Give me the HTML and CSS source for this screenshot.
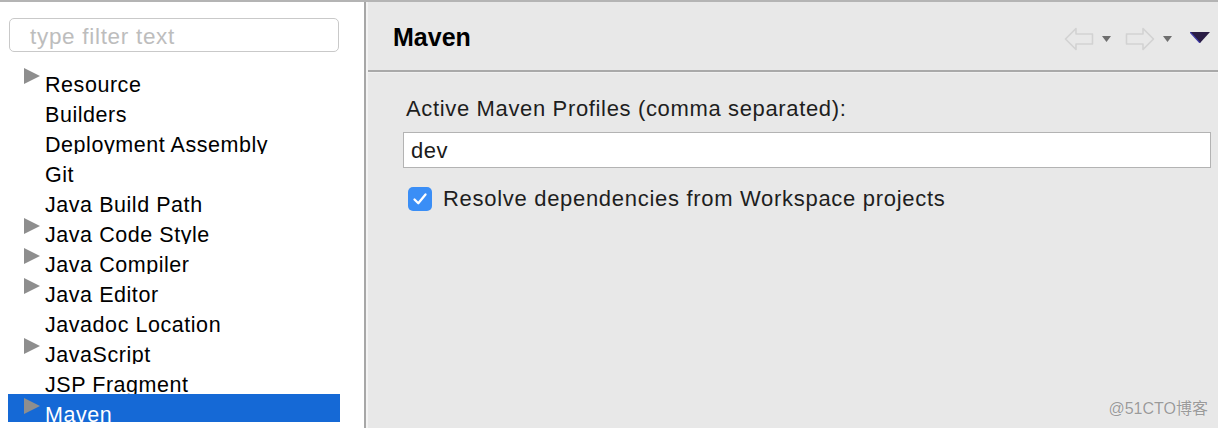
FILE: index.html
```html
<!DOCTYPE html>
<html>
<head>
<meta charset="utf-8">
<link rel="stylesheet" href="styles.css">
</head>
<body>
<div class="app">
  <aside class="left">
    <div class="filter">type filter text</div>
    <ul class="tree">
      <li class="row has-kids"><span class="twisty"></span><span class="label">Resource</span></li>
      <li class="row"><span class="label">Builders</span></li>
      <li class="row"><span class="label">Deployment Assembly</span></li>
      <li class="row"><span class="label">Git</span></li>
      <li class="row"><span class="label">Java Build Path</span></li>
      <li class="row has-kids"><span class="twisty"></span><span class="label">Java Code Style</span></li>
      <li class="row has-kids"><span class="twisty"></span><span class="label">Java Compiler</span></li>
      <li class="row has-kids"><span class="twisty"></span><span class="label">Java Editor</span></li>
      <li class="row"><span class="label">Javadoc Location</span></li>
      <li class="row has-kids"><span class="twisty"></span><span class="label">JavaScript</span></li>
      <li class="row"><span class="label">JSP Fragment</span></li>
      <li class="row has-kids selected"><span class="twisty"></span><span class="label">Maven</span></li>
    </ul>
  </aside>
  <div class="divider"></div>
  <main class="right">
    <header class="head">
      <h1 class="title">Maven</h1>
      <div class="nav">
        <svg class="arrow" width="30" height="24" viewBox="0 0 30 24"><path d="M1.5 12 L12 1.5 L12 7 L28.5 7 L28.5 17 L12 17 L12 22.5 Z" fill="none" stroke="#d2d2d2" stroke-width="1.6" stroke-linejoin="round"/></svg>
        <svg class="drop" width="9" height="6" viewBox="0 0 9 6"><path d="M0 0 H9 L4.5 6 Z" fill="#6e6e6e"/></svg>
        <svg class="arrow fwd" width="30" height="24" viewBox="0 0 30 24"><path d="M28.5 12 L18 1.5 L18 7 L1.5 7 L1.5 17 L18 17 L18 22.5 Z" fill="none" stroke="#d2d2d2" stroke-width="1.6" stroke-linejoin="round"/></svg>
        <svg class="drop" width="9" height="6" viewBox="0 0 9 6"><path d="M0 0 H9 L4.5 6 Z" fill="#6e6e6e"/></svg>
        <svg class="menu" width="20" height="11" viewBox="0 0 20 11"><path d="M0 0 H20 L10 11 Z" fill="#2a1d45"/><path d="M0 0 L10 11" stroke="#3f3aa8" stroke-width="1.2"/></svg>
      </div>
    </header>
    <div class="sep"></div>
    <section class="body">
      <div class="field-label">Active Maven Profiles (comma separated):</div>
      <div class="input">dev</div>
      <label class="check">
        <span class="box"><svg width="16" height="14" viewBox="0 0 16 14"><path d="M2.5 7.5 L6.3 11.3 L13.5 2.5" fill="none" stroke="#fff" stroke-width="2.3" stroke-linecap="round" stroke-linejoin="round"/></svg></span>
        <span class="check-text">Resolve dependencies from Workspace projects</span>
      </label>
    </section>
    <div class="watermark">@51CTO博客</div>
  </main>
</div>
</body>
</html>
```
FILE: styles.css
```css
* { box-sizing: border-box; }
html, body { margin: 0; padding: 0; }
body {
  width: 1218px;
  height: 428px;
  overflow: hidden;
  border-top: 2px solid #b4b4b4;
  font-family: "Liberation Sans", Arial, "Noto Sans CJK SC", sans-serif;
  background: #ffffff;
}
.app {
  display: flex;
  height: 426px;
}
.left {
  width: 364px;
  background: #ffffff;
  padding-top: 16px;
  overflow: hidden;
}
.filter {
  margin-left: 9px;
  width: 330px;
  height: 34px;
  border: 1px solid #c9c9c9;
  border-radius: 5px;
  padding-left: 20px;
  padding-top: 2px;
  font-size: 22.5px;
  letter-spacing: 0.7px;
  line-height: 32px;
  color: #bdbdbd;
  white-space: nowrap;
  overflow: hidden;
}
.tree {
  list-style: none;
  margin: 12px 0 0 8px;
  padding: 0;
  width: 332px;
}
.row {
  position: relative;
  height: 30px;
  overflow: hidden;
  padding-top: 6px;
  padding-left: 37px;
  font-size: 21.5px;
  letter-spacing: 0.55px;
  line-height: 30px;
  color: #000;
  white-space: nowrap;
}
.row.selected {
  height: 28px;
  background: #1569d6;
  color: #fff;
}
.twisty {
  position: absolute;
  left: 16px;
  top: 4px;
  width: 0;
  height: 0;
  border-top: 8.5px solid transparent;
  border-bottom: 8.5px solid transparent;
  border-left: 16px solid #8e8e8e;
}
.divider {
  width: 4px;
  border-left: 2px solid #a7a7a7;
  background: #f3f3f3;
}
.right {
  position: relative;
  flex: 1;
  background: #e8e8e8;
  display: flex;
  flex-direction: column;
}
.head {
  height: 68px;
  display: flex;
  align-items: center;
  justify-content: space-between;
  padding: 0 8px 0 25px;
}
.title {
  margin: 0;
  font-size: 25px;
  font-weight: bold;
  color: #000;
  padding-top: 2px;
}
.nav {
  display: flex;
  align-items: center;
  padding-top: 6px;
}
.nav .arrow { margin-right: 8px; }
.nav .drop { margin-right: 14px; }
.nav .menu { margin-left: 4px; margin-top: -4px; }
.sep {
  height: 3px;
  border-top: 2px solid #a9a9a9;
  background: #f0f0f0;
}
.body {
  padding: 23px 7px 0 35px;
}
.field-label {
  margin-left: 3px;
  font-size: 22px;
  letter-spacing: 0.65px;
  line-height: 26px;
  color: #1e1e1e;
  white-space: nowrap;
}
.input {
  margin-top: 10px;
  height: 36px;
  border: 1px solid #b3b3b3;
  background: #fff;
  padding-left: 7px;
  padding-top: 2px;
  font-size: 22px;
  letter-spacing: 0.5px;
  line-height: 32px;
  color: #1a1a1a;
}
.check {
  display: flex;
  align-items: center;
  margin-top: 17px;
  margin-left: 5px;
}
.box {
  width: 24px;
  height: 24px;
  border-radius: 5px;
  background: #3a8ef6;
  display: flex;
  align-items: center;
  justify-content: center;
  margin-right: 11px;
}
.check-text {
  font-size: 22px;
  letter-spacing: 0.7px;
  line-height: 26px;
  color: #1e1e1e;
  white-space: nowrap;
  padding-top: 1px;
}
.watermark {
  position: absolute;
  right: 10px;
  bottom: 9px;
  font-size: 16px;
  color: #9a9a9a;
  text-shadow: 0 0 1px #fff;
}
```
